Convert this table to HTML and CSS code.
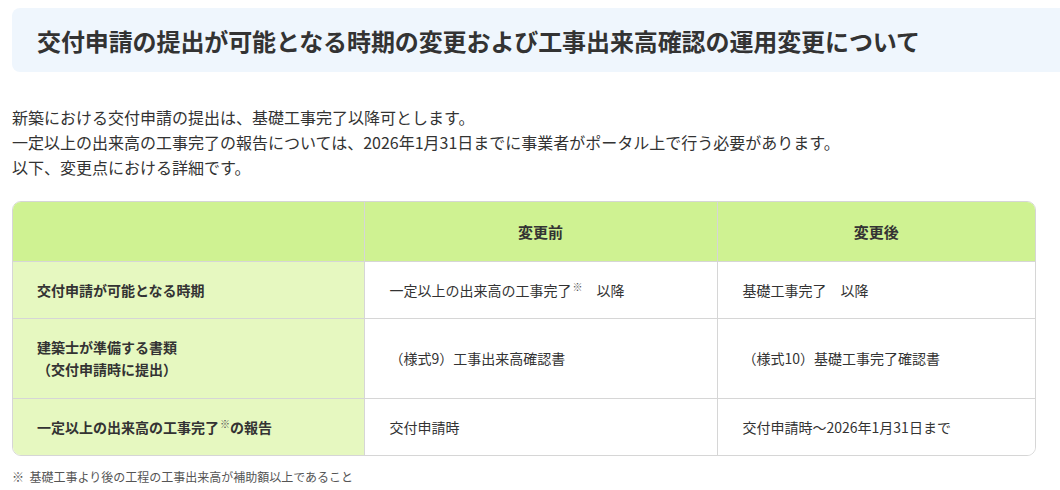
FILE: index.html
```html
<!DOCTYPE html>
<html lang="ja">
<head>
<meta charset="utf-8">
<link rel="stylesheet" href="styles.css">
</head>
<body>
<div class="page">
  <h1 class="title">交付申請の提出が可能となる時期の変更および工事出来高確認の運用変更について</h1>
  <p class="lead">新築における交付申請の提出は、基礎工事完了以降可とします。<br>一定以上の出来高の工事完了の報告については、2026年1月31日までに事業者がポータル上で行う必要があります。<br>以下、変更点における詳細です。</p>
  <div class="table-wrap">
    <table class="changes">
      <colgroup><col class="c1"><col class="c2"><col class="c3"></colgroup>
      <thead>
        <tr><th></th><th>変更前</th><th>変更後</th></tr>
      </thead>
      <tbody>
        <tr><th>交付申請が可能となる時期</th><td>一定以上の出来高の工事完了<sup>※</sup>　以降</td><td>基礎工事完了　以降</td></tr>
        <tr class="tall"><th>建築士が準備する書類<br>（交付申請時に提出）</th><td>（様式9）工事出来高確認書</td><td>（様式10）基礎工事完了確認書</td></tr>
        <tr><th>一定以上の出来高の工事完了<sup>※</sup>の報告</th><td>交付申請時</td><td>交付申請時～2026年1月31日まで</td></tr>
      </tbody>
    </table>
  </div>
  <p class="note">※&nbsp; 基礎工事より後の工程の工事出来高が補助額以上であること</p>
</div>
</body>
</html>
```
FILE: styles.css
```css
html, body { margin: 0; padding: 0; background: #fff; }
body {
  font-family: "Noto Sans CJK JP", "Noto Sans", sans-serif;
  color: #333;
  overflow: hidden;
}
.page { padding: 8px 0 0 12px; }
.title {
  margin: 0;
  background: #eff6fd;
  border-radius: 8px 0 0 8px;
  height: 64px;
  display: flex;
  align-items: center;
  padding: 0 25px;
  font-size: 24px;
  font-weight: 700;
  color: #333;
  letter-spacing: -0.1px;
}
.lead {
  margin: 33px 0 0;
  font-size: 16px;
  line-height: 25px;
  color: #333;
}
.table-wrap {
  margin-top: 21px;
  width: 1024px;
  border: 1px solid #d6d6d6;
  border-radius: 9px;
  overflow: hidden;
  box-sizing: border-box;
}
.changes {
  width: 100%;
  border-collapse: collapse;
  table-layout: fixed;
  font-size: 14px;
  line-height: 22px;
}
.c1 { width: 351px; }
.c2 { width: 353px; }
.changes thead th {
  background: #cff292;
  font-size: 15px;
  line-height: 24px;
  font-weight: 700;
  text-align: center;
  padding: 18px 0 17px;
  border-left: 1px solid #d6d6d6;
}
.changes thead th:first-child { border-left: none; }
.changes tbody th {
  background: #e6f8c0;
  font-weight: 700;
  text-align: left;
  padding: 17px 24px 17px 24px;
}
.changes tbody td {
  background: #fff;
  padding: 17px 25px 17px 25px;
  border-left: 1px solid #d6d6d6;
}
.changes tbody tr.tall th, .changes tbody tr.tall td { padding-bottom: 18px; }
.changes tbody tr th, .changes tbody tr td { border-top: 1px solid #d6d6d6; }
sup {
  font-size: 10px;
  line-height: 0;
  vertical-align: 5px;
  color: #555;
  margin-left: 1px;
}
.note {
  margin: 11px 0 0;
  font-size: 12px;
  line-height: 20px;
  color: #555;
}
```
